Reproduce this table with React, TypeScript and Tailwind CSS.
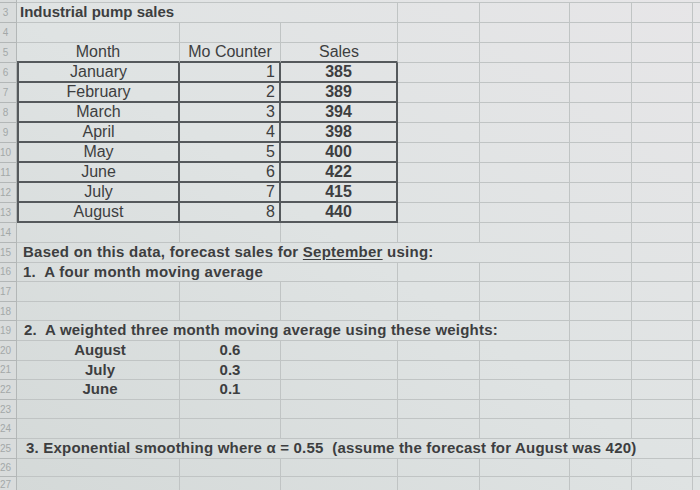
import React from "react";

const widths = [163, 101, 117, 82, 90, 62, 61];
const colW = ["w-[163px]", "w-[101px]", "w-[117px]", "w-[82px]", "w-[90px]", "w-[62px]", "w-[61px]"];

const data = [
  ["January", "1", "385"],
  ["February", "2", "389"],
  ["March", "3", "394"],
  ["April", "4", "398"],
  ["May", "5", "400"],
  ["June", "6", "422"],
  ["July", "7", "415"],
  ["August", "8", "440"],
];

const weights = [
  ["August", "0.6"],
  ["July", "0.3"],
  ["June", "0.1"],
];

function RowHead({ n }: { n: number }) {
  return (
    <div className="flex w-[17px] shrink-0 items-center justify-center border-r border-b border-[#b3b7b7] bg-[#d9dcdc] pr-[5px] text-[10px] text-[#a3a8a8]">
      {n}
    </div>
  );
}

function Blank({ from = 0 }: { from?: number }) {
  return (
    <>
      {colW.slice(from).map((w, i) => (
        <div key={i} className={`${w} shrink-0 border-r border-b border-[#c0c4c4]`} />
      ))}
      <div className="flex-1 border-b border-[#c0c4c4]" />
    </>
  );
}

function Row({ n, h = "h-[20px]", children }: { n: number; h?: string; children?: React.ReactNode }) {
  return (
    <div className={`flex ${h}`}>
      <RowHead n={n} />
      {children ?? <Blank />}
    </div>
  );
}

// text that runs across several empty cells
function Long({ span, className, children }: { span: number; className?: string; children: React.ReactNode }) {
  const w = widths.slice(0, span).reduce((a, b) => a + b, 0);
  return (
    <>
      <div
        style={{ width: w }}
        className={`flex shrink-0 items-center whitespace-nowrap border-r border-b border-[#c0c4c4] font-bold ${className ?? ""}`}
      >
        {children}
      </div>
      <Blank from={span} />
    </>
  );
}

export default function App() {
  const tall = "h-[19.6px]";
  return (
    <div className="h-[490px] w-[700px] overflow-hidden bg-linear-to-bl from-[#e7e6e8] via-[#dfe3e3] to-[#d4d9d8] font-['Liberation_Sans',Arial,sans-serif] text-[#3d3e40]">
      <div className="flex h-[3px]">
        <div className="w-[17px] shrink-0 border-r border-b border-[#b3b7b7] bg-[#d9dcdc]" />
        <div className="flex-1 border-b border-[#c0c4c4]" />
      </div>
      <Row n={3}>
        <Long span={3} className="pl-[3px] text-[15px]">
          Industrial pump sales
        </Long>
      </Row>
      <Row n={4} />
      <Row n={5}>
        <div className="flex w-[163px] shrink-0 items-center justify-center border-r border-b-2 border-r-[#c0c4c4] border-b-[#55595c] text-[16px]">
          Month
        </div>
        <div className="flex w-[101px] shrink-0 items-center justify-center border-r border-b-2 border-r-[#c0c4c4] border-b-[#55595c] text-[16px]">
          Mo Counter
        </div>
        <div className="flex w-[117px] shrink-0 items-center justify-center border-r border-b-2 border-r-[#c0c4c4] border-b-[#55595c] text-[16px]">
          Sales
        </div>
        <Blank from={3} />
      </Row>
      {data.map(([m, c, s], i) => (
        <Row key={m} n={6 + i}>
          <div className="flex w-[163px] shrink-0 items-center justify-center border-x-2 border-b-2 border-[#55595c] text-[16px]">
            {m}
          </div>
          <div className="flex w-[101px] shrink-0 items-center justify-end border-r-2 border-b-2 border-[#55595c] pr-[4px] text-[16px]">
            {c}
          </div>
          <div className="flex w-[117px] shrink-0 items-center justify-center border-r-2 border-b-2 border-[#55595c] text-[16px] font-bold">
            {s}
          </div>
          <Blank from={3} />
        </Row>
      ))}
      <Row n={14} />
      <Row n={15} h={tall}>
        <Long span={5} className="pl-[6px] text-[15px] tracking-[0.25px]">
          Based on this data, forecast sales for&nbsp;<span className="underline underline-offset-2">September</span>&nbsp;using:
        </Long>
      </Row>
      <Row n={16} h={tall}>
        <Long span={3} className="pl-[6px] text-[15px] tracking-[0.25px]">
          1.&nbsp; A four month moving average
        </Long>
      </Row>
      <Row n={17} h={tall} />
      <Row n={18} h={tall} />
      <Row n={19} h={tall}>
        <Long span={5} className="pl-[7px] text-[15px] tracking-[0.2px]">
          2.&nbsp; A weighted three month moving average using these weights:
        </Long>
      </Row>
      {weights.map(([m, v], i) => (
        <Row key={m} n={20 + i} h={tall}>
          <div className="flex w-[163px] shrink-0 items-center justify-center border-r border-b border-[#c0c4c4] pl-[4px] text-[15px] font-bold">
            {m}
          </div>
          <div className="flex w-[101px] shrink-0 items-center justify-center border-r border-b border-[#c0c4c4] text-[15px] font-bold">
            {v}
          </div>
          <Blank from={2} />
        </Row>
      ))}
      <Row n={23} h={tall} />
      <Row n={24} h={tall} />
      <Row n={25} h={tall}>
        <Long span={7} className="pl-[9px] text-[15px] tracking-[0.2px]">
          3. Exponential smoothing where α = 0.55&nbsp; (assume the forecast for August was 420)
        </Long>
      </Row>
      <Row n={26} h="h-[18px]" />
      <Row n={27} h="h-[16px]" />
    </div>
  );
}
